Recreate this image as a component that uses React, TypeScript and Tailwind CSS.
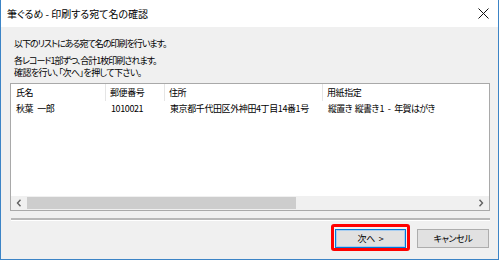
import React from "react";

const font = "font-['Noto_Sans_CJK_JP','Noto_Sans',sans-serif] [font-feature-settings:'palt']";

export default function App() {
  return (
    <div className={`w-[500px] h-[261px] bg-white ${font} text-black`}>
      <div className="w-[499px] h-[260px] flex flex-col border-l border-r border-b border-[#3c84c6] bg-[#f0f0f0]">
        {/* title bar */}
        <div className="h-[27px] bg-white flex items-center pl-[6px] pr-[9px] shrink-0">
          <div className="text-[10px] leading-[12px] flex-1">筆ぐるめ - 印刷する宛て名の確認</div>
          <svg width="11" height="11" viewBox="0 0 11 11" className="mb-[1px]">
            <path d="M0.5 0.5 L10.5 10.5 M10.5 0.5 L0.5 10.5" stroke="#111" strokeWidth="1" />
          </svg>
        </div>
        {/* body */}
        <div className="flex-1 flex flex-col">
          <div className="pl-[13px] text-[9px] leading-[12px]">
            <div className="mt-[11px] h-[12px] tracking-[-1px]">以下のリストにある宛て名の印刷を行います。</div>
            <div className="mt-[5px] h-[12px] tracking-[-1px]">各レコード1部ずつ、合計1枚印刷されます。</div>
            <div className="h-[12px] tracking-[-0.6px]">確認を行い、「次へ」を押して下さい。</div>
          </div>
          {/* list */}
          <div className="ml-[9px] mt-[4px] w-[480px] h-[128px] border border-[#a9a9a9] bg-white flex flex-col text-[9px] tracking-[-0.4px]">
            <div className="flex h-[17px] items-stretch">
              <div className="w-[95px] flex items-center pl-[5px] border-r border-[#e5e5e5]">氏名</div>
              <div className="w-[59px] flex items-center pl-[4px] border-r border-[#e5e5e5]">郵便番号</div>
              <div className="w-[158px] flex items-center pl-[4px] border-r border-[#e5e5e5]">住所</div>
              <div className="flex-1 flex items-center pl-[4px]">用紙指定</div>
            </div>
            <div className="flex h-[15px] items-center">
              <div className="w-[95px] pl-[5px] whitespace-nowrap">
                <span>秋葉</span>
                <span className="ml-[4px]">一郎</span>
              </div>
              <div className="w-[59px] pl-[5px]">1010021</div>
              <div className="w-[158px] pl-[5px] whitespace-nowrap">東京都千代田区外神田4丁目14番1号</div>
              <div className="flex-1 pl-[5px] tracking-[-0.7px] whitespace-nowrap">
                <span>縦置き</span>
                <span className="ml-[3px]">縦書き</span>
                <span className="ml-[1px]">1</span>
                <span className="ml-[4px]">-</span>
                <span className="ml-[4px]">年賀はがき</span>
              </div>
            </div>
            <div className="flex-1" />
            {/* scrollbar */}
            <div className="h-[14px] bg-[#f0f0f0] flex items-stretch">
              <div className="w-[16px] flex items-center justify-center">
                <svg width="6" height="8" viewBox="0 0 6 8">
                  <path d="M4.5 0.8 L1.5 4 L4.5 7.2" stroke="#606060" strokeWidth="1.4" fill="none" />
                </svg>
              </div>
              <div className="w-[269px] bg-[#cdcdcd] my-[1px]" />
              <div className="flex-1" />
              <div className="w-[16px] flex items-center justify-center">
                <svg width="6" height="8" viewBox="0 0 6 8">
                  <path d="M1.5 0.8 L4.5 4 L1.5 7.2" stroke="#606060" strokeWidth="1.4" fill="none" />
                </svg>
              </div>
            </div>
          </div>
          {/* separator */}
          <div className="ml-[10px] mt-[7px] w-[479px] h-[3px] border-t-2 border-[#b8b8b8] border-b border-b-white" />
          {/* buttons */}
          <div className="flex justify-end gap-[11px] pr-[9px] mt-[8px] text-[9px] tracking-[-0.4px]">
            <div className="relative">
              <div className="w-[71px] h-[19px] bg-[#e1e1e1] border border-[#0078d7] shadow-[inset_0_0_0_1px_#a8cdf0] flex items-center justify-center">
                <span>次へ</span>
                <span className="ml-[4px]">&gt;</span>
              </div>
              <div className="absolute left-[-4px] top-[-5px] w-[79px] h-[27px] border-[3px] border-[#ff0000] rounded-[3px]" />
            </div>
            <div className="w-[72px] h-[19px] bg-[#e1e1e1] border border-[#adadad] flex items-center justify-center">
              キャンセル
            </div>
          </div>
        </div>
      </div>
    </div>
  );
}
